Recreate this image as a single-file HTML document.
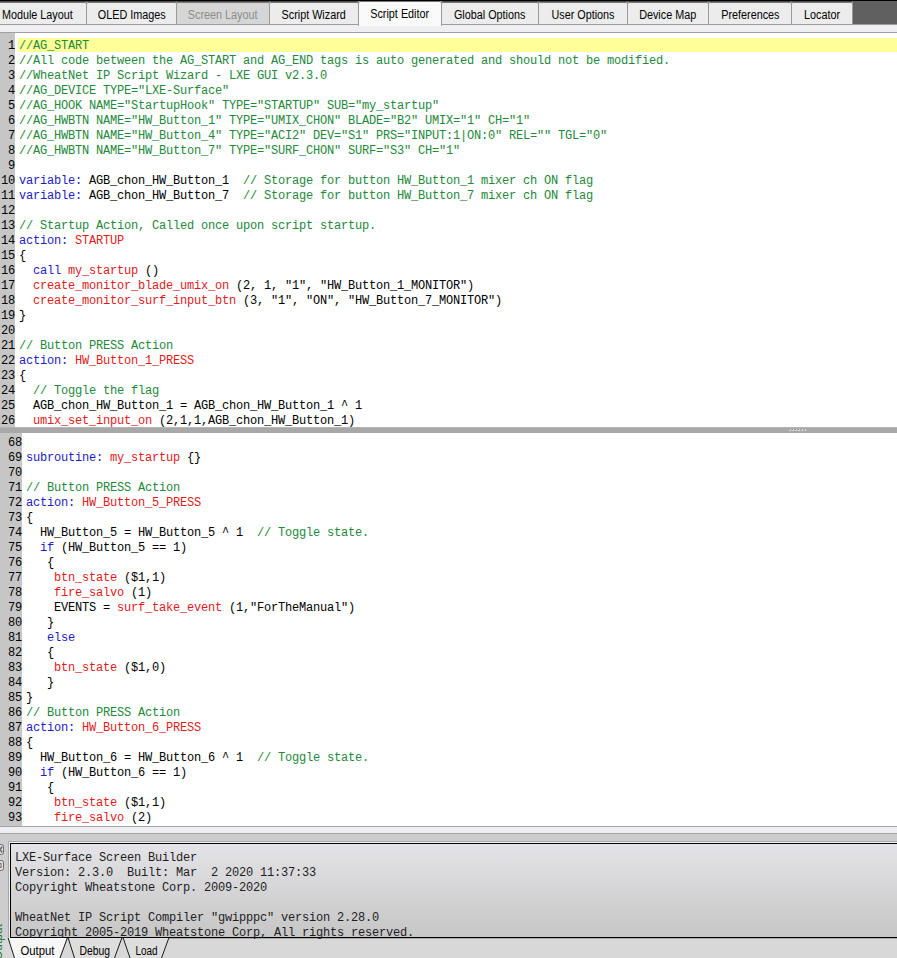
<!DOCTYPE html>
<html><head><meta charset="utf-8">
<style>
*{margin:0;padding:0;box-sizing:border-box}
html,body{width:897px;height:958px;overflow:hidden;background:#f0f0f0}
body{position:relative;font-family:"Liberation Sans",sans-serif}
.abs{position:absolute}
#tabbar{left:0;top:0;width:897px;height:25px;background:#606060;border-top:1px solid #000;border-bottom:1px solid #9c9c9c}
.tab{position:absolute;top:1px;height:23px;background:#ececec;border:1px solid #9a9a9a;border-top:1px solid #4a4a4a;box-shadow:inset 0 1px 0 #767676;border-bottom:none;border-radius:2px 2px 0 0;font-size:12px;color:#000;text-align:center;line-height:26px;white-space:nowrap}
.tab span{display:inline-block;transform:scaleX(.9)}
.tab.dis{background:#d6d6d6;color:#8c8c8c}
.tab.act{top:1px;height:25px;background:#fafafa;border-top:none;line-height:27px;z-index:2}
#band{left:0;top:25px;width:897px;height:8px;background:#efeff2;border-bottom:1px solid #a0a0a0}
.ed{position:absolute;left:0;width:897px;background:#fff;overflow:hidden;font-family:"Liberation Mono",monospace;font-size:12px;letter-spacing:-0.2px;line-height:15px;white-space:pre}
.gut{position:absolute;left:0;top:0;bottom:0;background:#c6c6c6}
.ln{position:absolute;left:0;text-align:right;color:#000}
.code{position:absolute;color:#000}
.c{color:#23883a}
.k{color:#1c1cc4}
.f{color:#e01b1b}
.hl{position:absolute;background:#ffff99}
#split{left:0;top:427px;width:897px;height:6px;background:#a8a8a8;border-top:1px solid #b4b4b4}
#obar{left:0;top:826px;width:897px;height:132px;background:#cdcdcd}
#opanel{left:10px;top:843px;width:887px;height:95px;border:1px solid #000;border-right:none;background:linear-gradient(#e4e4e8,#c6c6c6)}
#opanel pre{position:absolute;left:4px;top:7px;font-family:"Liberation Mono",monospace;font-size:12px;letter-spacing:-0.2px;line-height:15px;color:#1e1e1e}
</style></head><body>
<div id="tabbar" class="abs"></div>
<div class="tab " style="left:-12px;width:99px"><span>Module Layout</span></div>
<div class="tab " style="left:86px;width:91px"><span>OLED Images</span></div>
<div class="tab dis" style="left:176px;width:94px"><span>Screen Layout</span></div>
<div class="tab " style="left:269px;width:90px"><span>Script Wizard</span></div>
<div class="tab act" style="left:358px;width:84px"><span>Script Editor</span></div>
<div class="tab " style="left:441px;width:98px"><span>Global Options</span></div>
<div class="tab " style="left:538px;width:90px"><span>User Options</span></div>
<div class="tab " style="left:627px;width:82px"><span>Device Map</span></div>
<div class="tab " style="left:708px;width:84px"><span>Preferences</span></div>
<div class="tab " style="left:791px;width:62px"><span>Locator</span></div>
<div id="band" class="abs"></div>

<div class="ed" id="ed1" style="top:33px;height:394px">
<div class="gut" style="width:15px"></div>
<div class="hl" style="left:18px;top:5px;width:879px;height:14px"></div>
<div class="ln" style="top:6px;width:15px">1
2
3
4
5
6
7
8
9
10
11
12
13
14
15
16
17
18
19
20
21
22
23
24
25
26</div>
<div class="code" style="left:19px;top:6px"><span class="c">//AG_START</span>
<span class="c">//All code between the AG_START and AG_END tags is auto generated and should not be modified.</span>
<span class="c">//WheatNet IP Script Wizard - LXE GUI v2.3.0</span>
<span class="c">//AG_DEVICE TYPE="LXE-Surface"</span>
<span class="c">//AG_HOOK NAME="StartupHook" TYPE="STARTUP" SUB="my_startup"</span>
<span class="c">//AG_HWBTN NAME="HW_Button_1" TYPE="UMIX_CHON" BLADE="B2" UMIX="1" CH="1"</span>
<span class="c">//AG_HWBTN NAME="HW_Button_4" TYPE="ACI2" DEV="S1" PRS="INPUT:1|ON:0" REL="" TGL="0"</span>
<span class="c">//AG_HWBTN NAME="HW_Button_7" TYPE="SURF_CHON" SURF="S3" CH="1"</span>

<span class="k">variable:</span> AGB_chon_HW_Button_1  <span class="c">// Storage for button HW_Button_1 mixer ch ON flag</span>
<span class="k">variable:</span> AGB_chon_HW_Button_7  <span class="c">// Storage for button HW_Button_7 mixer ch ON flag</span>

<span class="c">// Startup Action, Called once upon script startup.</span>
<span class="k">action:</span> <span class="f">STARTUP</span>
{
  <span class="k">call</span> <span class="f">my_startup</span> ()
  <span class="f">create_monitor_blade_umix_on</span> (2, 1, "1", "HW_Button_1_MONITOR")
  <span class="f">create_monitor_surf_input_btn</span> (3, "1", "ON", "HW_Button_7_MONITOR")
}

<span class="c">// Button PRESS Action</span>
<span class="k">action:</span> <span class="f">HW_Button_1_PRESS</span>
{
  <span class="c">// Toggle the flag</span>
  AGB_chon_HW_Button_1 = AGB_chon_HW_Button_1 ^ 1
  <span class="f">umix_set_input_on</span> (2,1,1,AGB_chon_HW_Button_1)</div>
</div>

<div id="split" class="abs"></div>
<div class="abs" style="left:789px;top:429px;width:1px;height:1px;background:#959595"></div><div class="abs" style="left:789px;top:430px;width:2px;height:1px;background:#d6d6d6"></div><div class="abs" style="left:790px;top:429px;width:1px;height:1px;background:#d6d6d6"></div><div class="abs" style="left:792px;top:429px;width:1px;height:1px;background:#959595"></div><div class="abs" style="left:792px;top:430px;width:2px;height:1px;background:#d6d6d6"></div><div class="abs" style="left:793px;top:429px;width:1px;height:1px;background:#d6d6d6"></div><div class="abs" style="left:795px;top:429px;width:1px;height:1px;background:#959595"></div><div class="abs" style="left:795px;top:430px;width:2px;height:1px;background:#d6d6d6"></div><div class="abs" style="left:796px;top:429px;width:1px;height:1px;background:#d6d6d6"></div><div class="abs" style="left:798px;top:429px;width:1px;height:1px;background:#959595"></div><div class="abs" style="left:798px;top:430px;width:2px;height:1px;background:#d6d6d6"></div><div class="abs" style="left:799px;top:429px;width:1px;height:1px;background:#d6d6d6"></div><div class="abs" style="left:801px;top:429px;width:1px;height:1px;background:#959595"></div><div class="abs" style="left:801px;top:430px;width:2px;height:1px;background:#d6d6d6"></div><div class="abs" style="left:802px;top:429px;width:1px;height:1px;background:#d6d6d6"></div><div class="abs" style="left:804px;top:429px;width:1px;height:1px;background:#959595"></div><div class="abs" style="left:804px;top:430px;width:2px;height:1px;background:#d6d6d6"></div><div class="abs" style="left:805px;top:429px;width:1px;height:1px;background:#d6d6d6"></div>


<div class="ed" id="ed2" style="top:433px;height:393px">
<div class="gut" style="width:22px"></div>
<div class="ln" style="top:3px;width:22px">68
69
70
71
72
73
74
75
76
77
78
79
80
81
82
83
84
85
86
87
88
89
90
91
92
93</div>
<div class="code" style="left:26px;top:3px">
<span class="k">subroutine:</span> <span class="f">my_startup</span> {}

<span class="c">// Button PRESS Action</span>
<span class="k">action:</span> <span class="f">HW_Button_5_PRESS</span>
{
  HW_Button_5 = HW_Button_5 ^ 1  <span class="c">// Toggle state.</span>
  <span class="k">if</span> (HW_Button_5 == 1)
   {
    <span class="f">btn_state</span> ($1,1)
    <span class="f">fire_salvo</span> (1)
    EVENTS = <span class="f">surf_take_event</span> (1,"ForTheManual")
   }
   <span class="k">else</span>
   {
    <span class="f">btn_state</span> ($1,0)
   }
}
<span class="c">// Button PRESS Action</span>
<span class="k">action:</span> <span class="f">HW_Button_6_PRESS</span>
{
  HW_Button_6 = HW_Button_6 ^ 1  <span class="c">// Toggle state.</span>
  <span class="k">if</span> (HW_Button_6 == 1)
   {
    <span class="f">btn_state</span> ($1,1)
    <span class="f">fire_salvo</span> (2)</div>
</div>

<div id="obar" class="abs"></div>
<div class="abs" style="left:0;top:938px;width:897px;height:20px;background:#d8d8d8"></div>
<div class="abs" style="left:0;top:826px;width:897px;height:8px;background:#efeff3;border-top:1px solid #a4a4a4;border-bottom:1px solid #a4a4a4"></div>
<div class="abs" style="left:8px;top:841px;width:889px;height:98px;border:1px solid #a8a8a8;border-right:none"></div>
<div class="abs" style="left:9px;top:842px;width:888px;height:96px;border:1px solid #f2f2f2;border-right:none"></div>
<svg class="abs" style="left:0;top:840px" width="8" height="118" viewBox="0 0 8 118">
<rect x="-3" y="4.5" width="6.5" height="10" rx="2" fill="#dcdcdc" stroke="#6e6e6e" stroke-width="1"/>
<path d="M-2,6.5 L2.2,12.5 M2.2,6.5 L-2,12.5" stroke="#6e6e6e" stroke-width="1.5" fill="none"/>
<rect x="-3" y="20.5" width="6.5" height="10" rx="2" fill="#dcdcdc" stroke="#6e6e6e" stroke-width="1"/>
<rect x="-3" y="23.5" width="4" height="4" fill="none" stroke="#6e6e6e" stroke-width="1"/>
<text transform="translate(1.5,120) rotate(-90)" font-family="Liberation Sans" font-size="12" fill="#2a7a3a">Output</text>
</svg>
<div id="opanel" class="abs"><pre>LXE-Surface Screen Builder
Version: 2.3.0  Built: Mar  2 2020 11:37:33
Copyright Wheatstone Corp. 2009-2020

WheatNet IP Script Compiler "gwipppc" version 2.28.0
Copyright 2005-2019 Wheatstone Corp, All rights reserved.</pre></div>
<svg class="abs" style="left:0;top:938px" width="897" height="20" viewBox="0 1 897 20">
<path d="M8.5,1 L14.5,21 L59.5,21 L67,1 Z" fill="#f7f7f7"/><path d="M68,1 L74.5,21 L114.5,21 L122,1 Z M123,1 L130,21 L161.5,21 L169,1 Z" fill="#dedede"/>
<path d="M8,0.5 L14.5,21 M67.5,0.5 L60,21 M68,0.5 L74.5,21 M122,0.5 L114.5,21 M123,0.5 L130,21 M169,0.5 L161.5,21" stroke="#1a1a1a" stroke-width="1" fill="none"/>
<text x="20.5" y="18" textLength="34" lengthAdjust="spacingAndGlyphs" font-family="Liberation Sans" font-size="12" fill="#000">Output</text>
<text x="79.5" y="18" textLength="30.5" lengthAdjust="spacingAndGlyphs" font-family="Liberation Sans" font-size="12" fill="#000">Debug</text>
<text x="135.5" y="18" textLength="22" lengthAdjust="spacingAndGlyphs" font-family="Liberation Sans" font-size="12" fill="#000">Load</text>
</svg>
</body></html>
